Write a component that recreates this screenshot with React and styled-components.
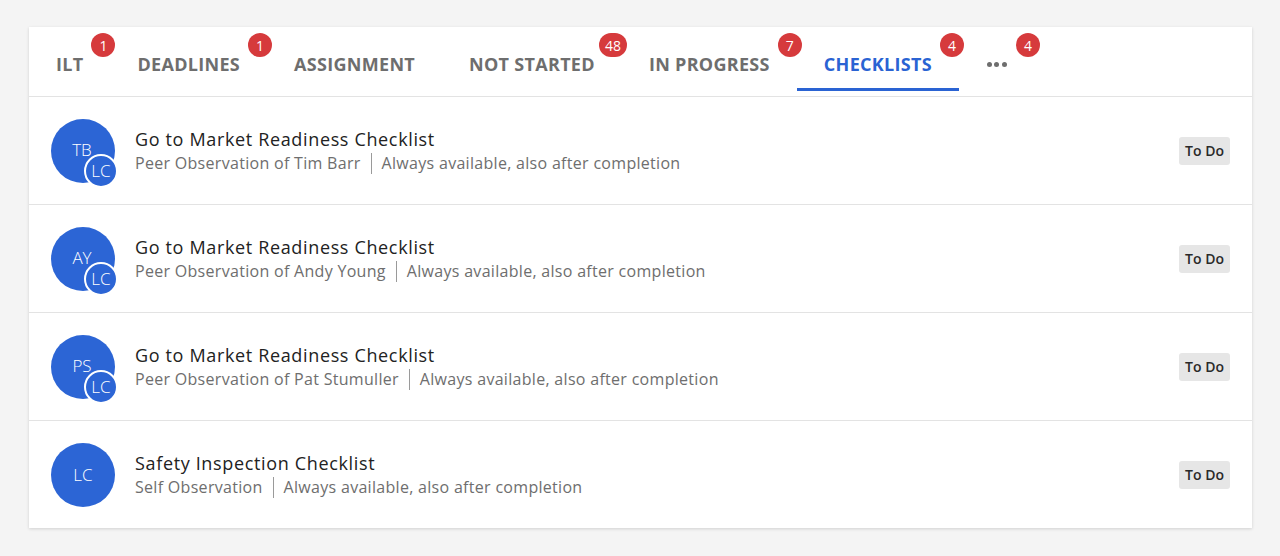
import React from 'react';
import styled, { createGlobalStyle } from 'styled-components';

const GlobalStyle = createGlobalStyle`
  body {
    margin: 0;
    background: #f4f4f4;
    font-family: "Open Sans", "Noto Sans", sans-serif;
  }
`;

const tabs = [
  { label: 'ILT', count: 1 },
  { label: 'DEADLINES', count: 1 },
  { label: 'ASSIGNMENT' },
  { label: 'NOT STARTED', count: 48 },
  { label: 'IN PROGRESS', count: 7 },
  { label: 'CHECKLISTS', count: 4, active: true },
  { label: 'more', count: 4, more: true },
];

const items = [
  { initials: 'TB', title: 'Go to Market Readiness Checklist', who: 'Peer Observation of Tim Barr' },
  { initials: 'AY', title: 'Go to Market Readiness Checklist', who: 'Peer Observation of Andy Young' },
  { initials: 'PS', title: 'Go to Market Readiness Checklist', who: 'Peer Observation of Pat Stumuller' },
  { initials: 'LC', title: 'Safety Inspection Checklist', who: 'Self Observation', self: true },
];

export default function App() {
  return (
    <>
      <GlobalStyle />
      <StyledPage>
        <StyledCard>
          <StyledTabs>
            {tabs.map(tab => (
              <StyledTab key={tab.label} isActive={tab.active}>
                {tab.more ? (
                  <StyledDots>
                    <StyledDot />
                    <StyledDot />
                    <StyledDot />
                  </StyledDots>
                ) : (
                  <StyledTabLabel>{tab.label}</StyledTabLabel>
                )}
                {tab.count && <StyledBadge>{tab.count}</StyledBadge>}
              </StyledTab>
            ))}
          </StyledTabs>
          {items.map((item, index) => (
            <StyledRow key={index}>
              <StyledAvatar>
                {item.self ? (
                  'LC'
                ) : (
                  <>
                    <StyledInitials>{item.initials}</StyledInitials>
                    <StyledSubAvatar>LC</StyledSubAvatar>
                  </>
                )}
              </StyledAvatar>
              <StyledInfo>
                <StyledTitle>{item.title}</StyledTitle>
                <StyledMeta>
                  <span>{item.who}</span>
                  <StyledDivider />
                  <span>Always available, also after completion</span>
                </StyledMeta>
              </StyledInfo>
              <StyledStatus>To Do</StyledStatus>
            </StyledRow>
          ))}
        </StyledCard>
      </StyledPage>
    </>
  );
}

const StyledPage = styled.div`
  padding: 27px 28px 29px 29px;
`;

const StyledCard = styled.div`
  background: #fff;
  box-shadow: 0 1px 3px rgba(0, 0, 0, 0.15);
`;

const StyledTabs = styled.div`
  display: flex;
  height: 69px;
  border-bottom: 1px solid #e3e3e3;
`;

const StyledTab = styled.div`
  position: relative;
  display: flex;
  align-items: flex-start;
  padding: 26px 27px 0;
  color: ${({ isActive }) => (isActive ? '#2a63d3' : '#6e6e6e')};
  border-bottom: 3px solid ${({ isActive }) => (isActive ? '#2a63d3' : 'transparent')};
  margin-bottom: 5px;
`;

const StyledTabLabel = styled.span`
  font-size: 18px;
  font-weight: 700;
  letter-spacing: 0.3px;
  line-height: 18px;
  padding-top: 2px;
`;

const StyledDots = styled.span`
  display: flex;
  gap: 2.5px;
  margin-top: 9px;
  padding: 0 1px;
`;

const StyledDot = styled.span`
  width: 5px;
  height: 5px;
  border-radius: 50%;
  background: #6e6e6e;
`;

const StyledBadge = styled.span`
  position: absolute;
  top: 6px;
  right: -5px;
  min-width: 24px;
  height: 24px;
  padding: 0 6px;
  box-sizing: border-box;
  border-radius: 12px;
  background: #d63a3c;
  color: #fff;
  font-size: 14px;
  font-weight: 500;
  display: flex;
  align-items: center;
  justify-content: center;
`;

const StyledRow = styled.div`
  display: flex;
  align-items: center;
  height: 107px;
  padding: 0 22px 0 22px;
  border-bottom: 1px solid #e3e3e3;
  &:last-child {
    border-bottom: none;
  }
`;

const StyledAvatar = styled.div`
  position: relative;
  flex: 0 0 64px;
  height: 64px;
  border-radius: 50%;
  background: #2c65d5;
  color: #fff;
  font-size: 17px;
  font-weight: 300;
  display: flex;
  align-items: center;
  justify-content: center;
`;

const StyledInitials = styled.span`
  transform: translate(-1px, -1px);
`;

const StyledSubAvatar = styled.span`
  position: absolute;
  left: 33px;
  top: 35px;
  width: 34px;
  height: 34px;
  box-sizing: border-box;
  border: 2px solid #fff;
  border-radius: 50%;
  background: #2c65d5;
  color: #fff;
  font-size: 17px;
  font-weight: 300;
  display: flex;
  align-items: center;
  justify-content: center;
`;

const StyledInfo = styled.div`
  flex: 1;
  margin-left: 20px;
  display: flex;
  flex-direction: column;
  gap: 1px;
`;

const StyledTitle = styled.div`
  font-size: 18px;
  letter-spacing: 0.65px;
  color: #222;
  line-height: 24px;
`;

const StyledMeta = styled.div`
  display: flex;
  align-items: center;
  font-size: 16px;
  letter-spacing: 0.3px;
  color: #6e6e6e;
  line-height: 22px;
`;

const StyledDivider = styled.span`
  width: 1px;
  height: 21px;
  background: #9a9a9a;
  margin: 0 10px;
`;

const StyledStatus = styled.div`
  background: #e6e6e6;
  color: #2a2a2a;
  font-size: 14px;
  font-weight: 600;
  height: 28px;
  padding: 0 6px;
  border-radius: 3px;
  display: flex;
  align-items: center;
`;
